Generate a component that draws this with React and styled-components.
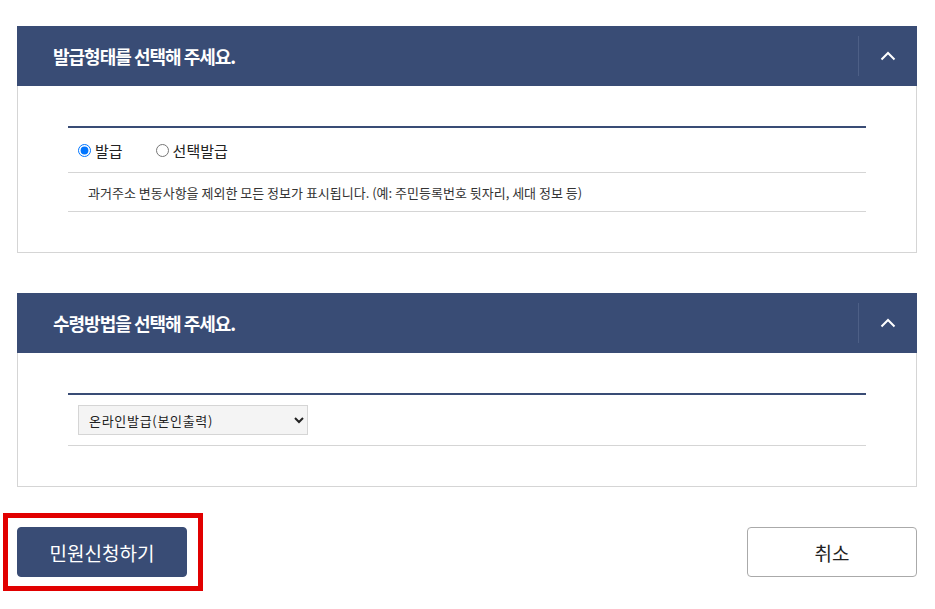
import React, { useState } from "react";
import styled, { createGlobalStyle } from "styled-components";

const GlobalStyle = createGlobalStyle`
  * { box-sizing: border-box; }
  body {
    margin: 0;
    background: #ffffff;
    font-family: "Noto Sans CJK KR", "Noto Sans", sans-serif;
    color: #222;
  }
`;

//Panel with collapsible header
function Panel({ title, children }) {
  return (
    <StyledPanel>
      <PanelHeader>
        <h2>{title}</h2>
        <ToggleButton aria-label="접기">
          <svg width="16" height="10" viewBox="0 0 16 10">
            <path d="M1.5 8.5 L8 2 L14.5 8.5" fill="none" stroke="#fff" strokeWidth="2" />
          </svg>
        </ToggleButton>
      </PanelHeader>
      <PanelBody>{children}</PanelBody>
    </StyledPanel>
  );
}

function App() {
  const [type, setType] = useState("issue");

  return (
    <Page>
      <GlobalStyle />
      <Panel title="발급형태를 선택해 주세요.">
        <Table>
          <Row $height={45}>
            <RadioLabel>
              <input
                type="radio"
                name="type"
                checked={type === "issue"}
                onChange={() => setType("issue")}
              />
              발급
            </RadioLabel>
            <RadioLabel>
              <input
                type="radio"
                name="type"
                checked={type === "select"}
                onChange={() => setType("select")}
              />
              선택발급
            </RadioLabel>
          </Row>
          <Row $height={39}>
            <Notice>
              과거주소 변동사항을 제외한 모든 정보가 표시됩니다. (예: 주민등록번호 뒷자리, 세대 정보 등)
            </Notice>
          </Row>
        </Table>
      </Panel>

      <Panel title="수령방법을 선택해 주세요.">
        <Table>
          <Row $height={51}>
            <Select defaultValue="online">
              <option value="online">온라인발급(본인출력)</option>
            </Select>
          </Row>
        </Table>
      </Panel>

      <Actions>
        <Highlight>
          <Button $primary>민원신청하기</Button>
        </Highlight>
        <Button>취소</Button>
      </Actions>
    </Page>
  );
}

//Styled components
const Page = styled.div`
  width: 935px;
  min-height: 609px;
  padding: 26px 18px 32px 17px;
  display: flex;
  flex-direction: column;
  gap: 40px;
`;

const StyledPanel = styled.section`
  width: 900px;
`;

const PanelHeader = styled.div`
  height: 60px;
  background: #394c75;
  display: flex;
  align-items: center;
  justify-content: space-between;
  padding-left: 36px;
  h2 {
    margin: 0;
    color: #fff;
    font-size: 18px;
    font-weight: 700;
    letter-spacing: -1px;
  }
`;

const ToggleButton = styled.button`
  width: 59px;
  height: 40px;
  border: 0;
  border-left: 1px solid #4d5f86;
  background: transparent;
  display: flex;
  align-items: center;
  justify-content: center;
  padding: 0;
  cursor: pointer;
`;

const PanelBody = styled.div`
  border: 1px solid #d5d5d5;
  border-top: 0;
  padding: 40px 50px;
`;

const Table = styled.div`
  border-top: 2px solid #394c75;
`;

const Row = styled.div`
  height: ${(p) => p.$height}px;
  border-bottom: 1px solid #d5d5d5;
  display: flex;
  align-items: center;
  gap: 33px;
  padding-left: 10px;
`;

const RadioLabel = styled.label`
  display: flex;
  align-items: center;
  gap: 4px;
  font-size: 15px;
  color: #222;
  cursor: pointer;
  input {
    margin: 0;
    width: 13px;
    height: 13px;
  }
`;

const Notice = styled.p`
  margin: 0;
  font-size: 13px;
  color: #333;
  letter-spacing: 0;
  padding-left: 10px;
`;

const Select = styled.select`
  width: 230px;
  height: 30px;
  background: #f4f4f4;
  border: 1px solid #d5d5d5;
  border-radius: 0;
  font-family: "Noto Sans CJK KR", sans-serif;
  font-size: 13px;
  letter-spacing: 0.7px;
  color: #222;
  padding: 0 6px;
`;

const Actions = styled.div`
  display: flex;
  justify-content: space-between;
  align-items: center;
  width: 900px;
`;

const Highlight = styled.div`
  position: relative;
  display: flex;
  &::after {
    content: "";
    position: absolute;
    top: -14px;
    left: -14px;
    right: -16px;
    bottom: -14px;
    border: 5px solid #e10000;
    pointer-events: none;
  }
`;

const Button = styled.button`
  width: 170px;
  height: 50px;
  border-radius: 4px;
  font-family: "Noto Sans CJK KR", sans-serif;
  font-size: 19px;
  cursor: pointer;
  background: ${(p) => (p.$primary ? "#394c75" : "#ffffff")};
  color: ${(p) => (p.$primary ? "#ffffff" : "#222")};
  border: 1px solid ${(p) => (p.$primary ? "#394c75" : "#aaaaaa")};
`;

export default App;
